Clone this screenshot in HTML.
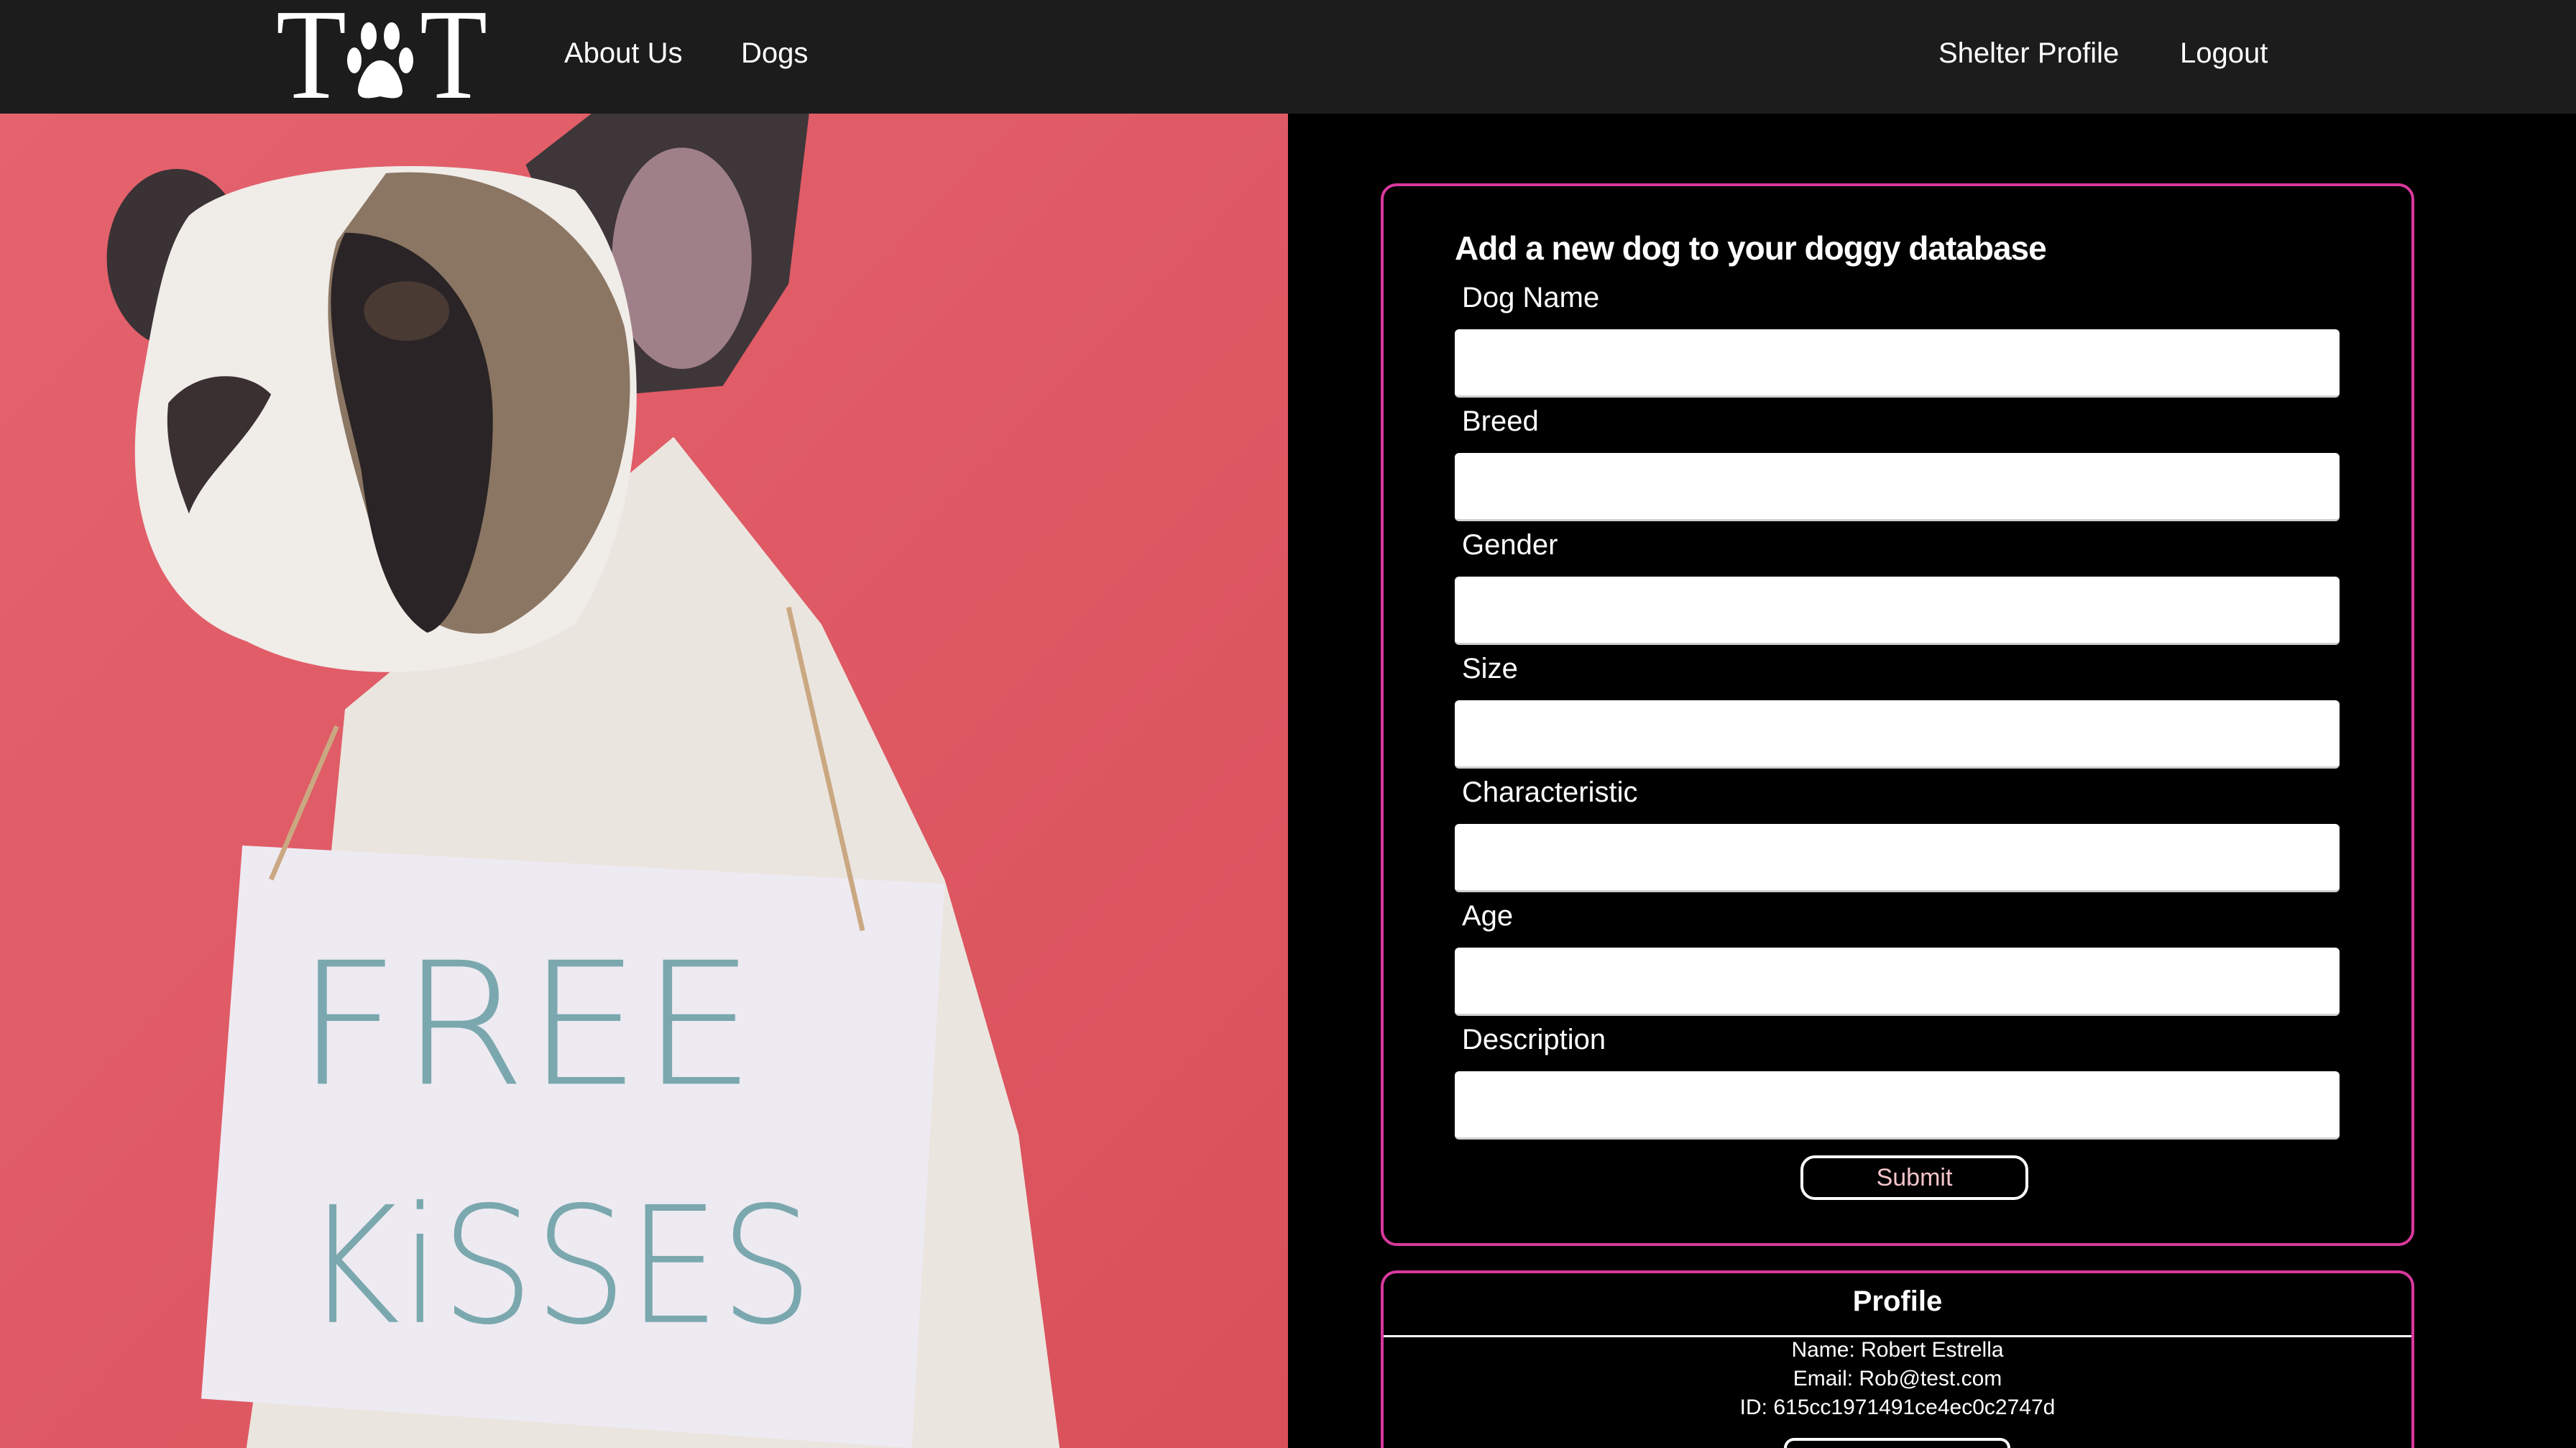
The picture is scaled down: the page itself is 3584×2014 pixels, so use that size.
<!DOCTYPE html>
<html><head><meta charset="utf-8"><style>
*{margin:0;padding:0;box-sizing:border-box}
html,body{width:3584px;height:2014px;overflow:hidden;background:#000}
body{font-family:"Liberation Sans",sans-serif}
#w{position:relative;width:3584px;height:2014px;overflow:hidden}
.nav{position:absolute;left:0;top:0;width:3584px;height:158px;background:#1c1c1c}
.nav a{position:absolute;color:#fff;font-size:40px;top:52px;text-decoration:none}
.img{position:absolute;left:0;top:158px;width:1792px;height:1856px}
.box{position:absolute;left:1921px;width:1438px;border:4px solid #d8399c;border-radius:22px}
h2{position:absolute;left:2024px;top:318px;color:#fff;font-size:46px;font-weight:bold;letter-spacing:-1px}
.lbl{position:absolute;left:2034px;color:#fff;font-size:40px}
.inp{position:absolute;left:2024px;width:1231px;height:95px;background:#fff;border-radius:6px;border-bottom:3px solid #d0d0d0}
.btn{position:absolute;border:4px solid #fff;border-radius:20px;color:#f4c4ca;font-size:34px;text-align:center}
.p{position:absolute;left:1921px;width:1438px;text-align:center;color:#fff;font-size:30px}
</style></head><body><div id="w">
<div class="nav">
<svg style="position:absolute;left:380px;top:14px" width="300" height="126" viewBox="0 0 300 126">
<text x="4" y="122" font-family="Liberation Serif" font-size="180" fill="#fff" textLength="98" lengthAdjust="spacingAndGlyphs">T</text>
<text x="204" y="122" font-family="Liberation Serif" font-size="180" fill="#fff" textLength="94" lengthAdjust="spacingAndGlyphs">T</text>
<g fill="#fff"><ellipse cx="133" cy="36" rx="11" ry="19"/><ellipse cx="165" cy="36" rx="11" ry="19"/><ellipse cx="113" cy="70" rx="10" ry="18"/><ellipse cx="185" cy="70" rx="10" ry="18"/>
<path d="M149 70 C130 70 118 100 118 112 C118 126 136 123 149 120 C162 123 180 126 180 112 C180 100 168 70 149 70Z"/></g>
</svg>
<a style="left:785px">About Us</a><a style="left:1031px">Dogs</a>
<a style="left:2697px">Shelter Profile</a><a style="left:3033px">Logout</a>
</div>
<svg class="img" viewBox="0 0 1568 1568" preserveAspectRatio="none">
<defs><linearGradient id="g" x1="0" y1="0" x2="1" y2="1"><stop offset="0" stop-color="#e4636e"/><stop offset="1" stop-color="#d9505a"/></linearGradient></defs>
<rect width="1568" height="1568" fill="url(#g)"/>
<path d="M420 700 L820 380 L1000 600 L1150 900 L1240 1200 L1290 1568 L300 1568 L400 900Z" fill="#ebe5df"/>
<ellipse cx="215" cy="170" rx="85" ry="105" fill="#3a3235"/>
<path d="M640 60 L720 0 L985 0 L960 200 L880 320 L760 330 Z" fill="#3e3639"/>
<ellipse cx="830" cy="170" rx="85" ry="130" fill="#a08088"/>
<path d="M230 120 C300 60 560 40 700 90 C800 200 800 450 700 600 C600 660 420 680 300 620 C180 580 150 450 170 330 C190 220 200 160 230 120Z" fill="#f0ece8"/>
<path d="M470 70 C600 60 720 120 760 250 C790 400 720 560 600 610 C520 620 470 560 450 480 C420 380 380 250 410 150Z" fill="#8b7663"/>
<path d="M420 140 C520 140 600 230 600 360 C600 480 560 600 520 610 C470 580 450 500 440 420 C420 330 380 220 420 140Z" fill="#2a2426"/>
<ellipse cx="495" cy="232" rx="52" ry="35" fill="#4a3a34"/>
<path d="M205 340 C240 300 300 300 330 330 C300 390 250 420 230 470 C210 420 200 380 205 340Z" fill="#3a3032"/>
<path d="M295 860 L1150 905 L1110 1568 L245 1510Z" fill="#eeeaf2"/>
<g fill="none" stroke="#caa882" stroke-width="6"><path d="M330 900 L410 720"/><path d="M1050 960 L960 580"/></g>
<g font-family="DejaVu Sans" font-weight="200" fill="#7aa8ae" font-size="200"><text x="360" y="1140" textLength="560" lengthAdjust="spacingAndGlyphs">FREE</text><text x="370" y="1420" font-size="190" textLength="620" lengthAdjust="spacingAndGlyphs">KiSSES</text></g>
</svg>
<div class="box" style="top:255px;height:1478px"></div>
<h2>Add a new dog to your doggy database</h2>
<div class="lbl" style="top:392px">Dog Name</div><div class="inp" style="top:458px"></div>
<div class="lbl" style="top:564px">Breed</div><div class="inp" style="top:630px"></div>
<div class="lbl" style="top:736px">Gender</div><div class="inp" style="top:802px"></div>
<div class="lbl" style="top:908px">Size</div><div class="inp" style="top:974px"></div>
<div class="lbl" style="top:1080px">Characteristic</div><div class="inp" style="top:1146px"></div>
<div class="lbl" style="top:1252px">Age</div><div class="inp" style="top:1318px"></div>
<div class="lbl" style="top:1424px">Description</div><div class="inp" style="top:1490px"></div>
<div class="btn" style="left:2505px;top:1607px;width:317px;height:62px;line-height:54px">Submit</div>
<div class="box" style="top:1767px;height:247px;border-bottom:none;border-radius:22px 22px 0 0"></div>
<div class="p" style="top:1788px;font-size:40px;font-weight:bold">Profile</div>
<div style="position:absolute;left:1925px;top:1857px;width:1430px;height:3px;background:#fff"></div>
<div class="p" style="top:1861px">Name: Robert Estrella</div>
<div class="p" style="top:1901px">Email: Rob@test.com</div>
<div class="p" style="top:1941px">ID: 615cc1971491ce4ec0c2747d</div>
<div class="btn" style="left:2482px;top:2000px;width:315px;height:14px;border-bottom:none;border-radius:20px 20px 0 0"></div>
</div></body></html>
